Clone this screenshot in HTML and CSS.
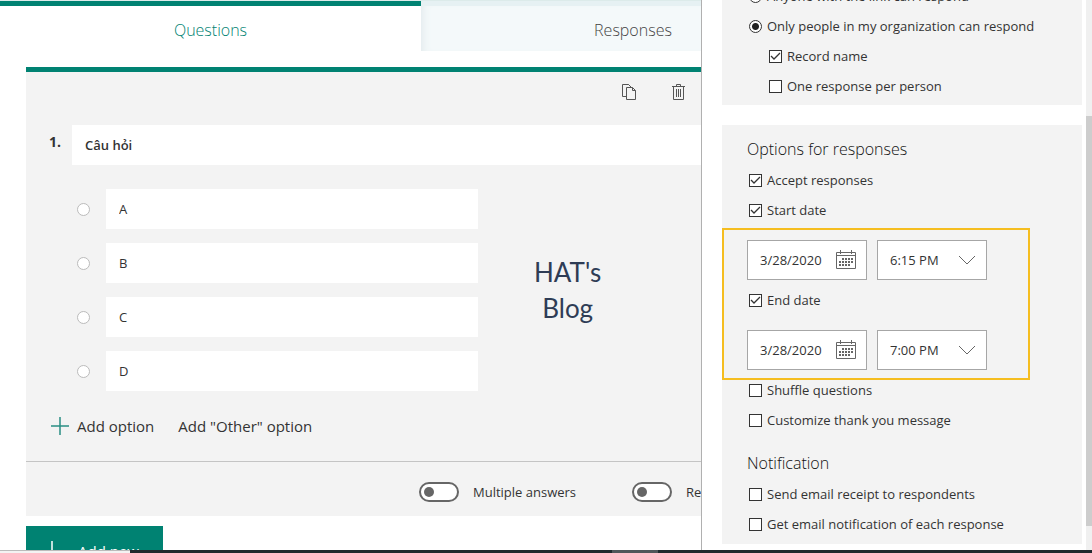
FILE: index.html
```html
<!DOCTYPE html>
<html lang="en">
<head>
  <meta charset="UTF-8">
  <meta name="viewport" content="width=device-width, initial-scale=1.0">
  <title>Forms - Edit</title>
  <link rel="stylesheet" href="styles.css">
</head>
<body>
  <div class="workspace">
    <main class="editor">
      <nav class="tabs">
        <a href="#questions" class="tab active">Questions</a>
        <a href="#responses" class="tab">Responses</a>
      </nav>

      <div class="editor-body">
        <section class="question-card">
          <div class="card-tools">
            <button class="icon-btn" aria-label="Copy question">
              <svg width="16" height="18" viewBox="0 0 16 18" fill="none" stroke="currentColor">
                <path d="M5 13.5H1.5v-12h6l3 3M7.5 1.5l3 3"/>
                <path d="M5.500 4.500h6l3 3v9h-9zM11.500 4.500v3h3"/>
              </svg>
            </button>
            <button class="icon-btn" aria-label="Delete question">
              <svg width="16" height="18" viewBox="0 0 16 18" fill="none" stroke="currentColor">
                <path d="M2 3.500h13M6.500 3.500v-2h4v2M3.500 3.500v13h10v-13M6.500 6v8M8.500 6v8M10.500 6v8"/>
              </svg>
            </button>
          </div>

          <div class="question-row">
            <span class="question-number">1.</span>
            <input type="text" class="question-title" value="Câu hỏi" aria-label="Question">
          </div>

          <div class="answers">
            <div class="options">
              <div class="option">
                <input type="radio" name="answer" class="answer-radio" aria-label="Option A">
                <input type="text" class="option-text" value="A" aria-label="Option 1 text">
              </div>
              <div class="option">
                <input type="radio" name="answer" class="answer-radio" aria-label="Option B">
                <input type="text" class="option-text" value="B" aria-label="Option 2 text">
              </div>
              <div class="option">
                <input type="radio" name="answer" class="answer-radio" aria-label="Option C">
                <input type="text" class="option-text" value="C" aria-label="Option 3 text">
              </div>
              <div class="option">
                <input type="radio" name="answer" class="answer-radio" aria-label="Option D">
                <input type="text" class="option-text" value="D" aria-label="Option 4 text">
              </div>
            </div>
            <p class="blog-name">HAT's<br>Blog</p>
          </div>

          <div class="option-actions">
            <button class="text-btn">
              <svg class="plus" width="18" height="18" viewBox="0 0 18 18" fill="none" stroke="currentColor">
                <path d="M9 0v18M0 9h18" stroke-width="1.500"/>
              </svg>
              Add option
            </button>
            <button class="text-btn">Add "Other" option</button>
          </div>

          <div class="card-footer">
            <label class="toggle"><input type="checkbox" class="switch">Multiple answers</label>
            <label class="toggle"><input type="checkbox" class="switch">Required</label>
          </div>
        </section>

        <button class="add-new">
          <svg width="20" height="20" viewBox="0 0 20 20" fill="none" stroke="currentColor">
            <path d="M10 0v20M0 10h20" stroke-width="1.500"/>
          </svg>
          Add new
        </button>
      </div>
    </main>

    <aside class="settings">
      <div class="settings-body">
        <section class="settings-group">
          <label class="setting"><input type="radio" name="audience" class="radio">Anyone with the link can respond</label>
          <label class="setting"><input type="radio" name="audience" class="radio" checked>Only people in my organization can respond</label>
          <label class="setting nested"><input type="checkbox" class="check" checked>Record name</label>
          <label class="setting nested"><input type="checkbox" class="check">One response per person</label>
        </section>

        <section class="settings-group">
          <h2 class="group-title">Options for responses</h2>
          <label class="setting"><input type="checkbox" class="check" checked>Accept responses</label>
          <label class="setting"><input type="checkbox" class="check" checked>Start date</label>

          <div class="schedule">
            <div class="date-row">
              <div class="date-field">
                <input type="text" value="3/28/2020" aria-label="Start date">
                <button class="calendar-btn" aria-label="Choose start date">
                  <svg width="20" height="20" viewBox="0 0 20 20" fill="none" stroke="currentColor">
                    <path d="M.5 2.500h19v16H.5zM.5 5.500h19M4.500 0v4M15.500 0v4"/>
                    <path d="M6 9h11M3 12h14M3 15h11" stroke-width="2" stroke-dasharray="2 1"/>
                  </svg>
                </button>
              </div>
              <select class="time-select" aria-label="Start time">
                <option>6:15 PM</option>
                <option>7:00 PM</option>
              </select>
            </div>
            <label class="setting"><input type="checkbox" class="check" checked>End date</label>
            <div class="date-row">
              <div class="date-field">
                <input type="text" value="3/28/2020" aria-label="End date">
                <button class="calendar-btn" aria-label="Choose end date">
                  <svg width="20" height="20" viewBox="0 0 20 20" fill="none" stroke="currentColor">
                    <path d="M.5 2.500h19v16H.5zM.5 5.500h19M4.500 0v4M15.500 0v4"/>
                    <path d="M6 9h11M3 12h14M3 15h11" stroke-width="2" stroke-dasharray="2 1"/>
                  </svg>
                </button>
              </div>
              <select class="time-select" aria-label="End time">
                <option>7:00 PM</option>
                <option>6:15 PM</option>
              </select>
            </div>
          </div>

          <label class="setting"><input type="checkbox" class="check">Shuffle questions</label>
          <label class="setting"><input type="checkbox" class="check">Customize thank you message</label>

          <h2 class="group-title">Notification</h2>
          <label class="setting"><input type="checkbox" class="check">Send email receipt to respondents</label>
          <label class="setting"><input type="checkbox" class="check">Get email notification of each response</label>
        </section>
      </div>
      <div class="scrollbar"><div class="scroll-thumb"></div></div>
    </aside>
  </div>

  <div class="taskbar"><span class="taskbar-search"></span><span class="taskbar-app"></span></div>
</body>
</html>
```

FILE: styles.css
```css
:root {
  --theme: #008272;
  --surface: #f3f3f3;
  --text: #333333;
  --border: #a6a6a6;
  --highlight: #f5bd1f;
}

*, *::before, *::after {
  box-sizing: border-box;
}

* {
  margin: 0;
  padding: 0;
}

body {
  display: flex;
  flex-direction: column;
  height: 100vh;
  overflow: hidden;
  font-family: "Open Sans", "Noto Sans", sans-serif;
  font-size: 13px;
  color: var(--text);
  background-color: #fff;
}

button, input, select {
  font: inherit;
  color: inherit;
}

button {
  background: none;
  border: none;
  cursor: pointer;
}

input[type="text"] {
  min-width: 0;
  border: none;
  background-color: #fff;
}

.workspace {
  flex: 1;
  display: flex;
  min-height: 0;
}

/* Editor */
.editor {
  flex: 1;
  min-width: 0;
  overflow: hidden;
}

.tabs {
  display: grid;
  grid-template-columns: 421px 424px;
  height: 51px;
  border-top: 1px solid #dcebea;
}

.tab {
  display: flex;
  align-items: center;
  justify-content: center;
  padding-top: 2px;
  border-top: 5px solid #e6f1f3;
  background-color: #f4f9fa;
  box-shadow: inset 8px 0 8px -6px #e2eaec;
  font-size: 16px;
  font-weight: 300;
  line-height: 24px;
  color: #444;
  text-decoration: none;
}

.tab.active {
  border-top-color: var(--theme);
  background-color: #fff;
  box-shadow: none;
  color: var(--theme);
}

.editor-body {
  padding: 16px 0 0 26px;
}

.question-card {
  border-top: 5px solid var(--theme);
  background-color: var(--surface);
}

.card-tools {
  display: flex;
  justify-content: flex-end;
  gap: 17px;
  height: 53px;
  padding: 4px 7px 0 0;
}

.icon-btn {
  display: flex;
  align-items: center;
  justify-content: center;
  width: 32px;
  height: 32px;
  color: #555;
}

.question-row {
  display: flex;
  padding-left: 23px;
  font-weight: 600;
}

.question-number {
  width: 23px;
  font-size: 14px;
  font-weight: 700;
  line-height: 34px;
}

.question-title {
  flex: 1;
  height: 40px;
  padding: 0 13px;
}

.answers {
  display: flex;
  align-items: center;
  gap: 56px;
  padding: 24px 0 0 51px;
}

.options {
  display: flex;
  flex-direction: column;
  gap: 14px;
}

.option {
  display: flex;
  align-items: center;
  gap: 16px;
}

.answer-radio {
  appearance: none;
  width: 13px;
  height: 13px;
  border: 1px solid #bbb;
  border-radius: 50%;
  background-color: #fff;
}

.option-text {
  width: 372px;
  height: 40px;
  padding: 0 13px;
}

.blog-name {
  font-family: Lato, "Open Sans", sans-serif;
  font-size: 26px;
  line-height: 36px;
  text-align: center;
  color: #2e3c55;
}

.option-actions {
  display: flex;
  gap: 24px;
  height: 70px;
  padding-left: 25px;
}

.text-btn {
  display: flex;
  align-items: center;
  gap: 8px;
  font-size: 15px;
}

.plus {
  color: #2a8f84;
}

.card-footer {
  display: flex;
  gap: 56px;
  height: 55px;
  padding: 5px 0 0 393px;
  border-top: 1px solid #c4c4c4;
  white-space: nowrap;
}

.toggle {
  display: flex;
  align-items: center;
  gap: 14px;
}

.switch {
  appearance: none;
  display: flex;
  align-items: center;
  width: 40px;
  height: 20px;
  padding-left: 3px;
  border: 2px solid #666;
  border-radius: 10px;
  background-color: #fff;
}

.switch::before {
  content: "";
  width: 10px;
  height: 10px;
  border-radius: 50%;
  background-color: #666;
}

.switch:checked {
  justify-content: flex-end;
}

.add-new {
  display: flex;
  align-items: center;
  gap: 16px;
  height: 50px;
  margin-top: 10px;
  padding: 0 24px 0 16px;
  background-color: var(--theme);
  color: #fff;
  font-size: 15px;
}

/* Settings panel */
.settings {
  display: flex;
  gap: 4px;
  border-left: 1px solid #b0b0b0;
  padding-left: 20px;
}

.settings-body {
  display: flex;
  flex-direction: column;
  justify-content: flex-end;
  gap: 20px;
  width: 360px;
  padding-bottom: 6px;
  overflow: hidden;
}

.settings-group {
  flex-shrink: 0;
  padding: 0 25px 5px;
  background-color: var(--surface);
}

.settings-group:first-child {
  padding-bottom: 4px;
}

.group-title {
  padding-top: 8px;
  font-size: 16px;
  font-weight: 300;
  line-height: 32px;
  color: #111;
}

.setting + .group-title {
  padding-top: 12px;
}

.setting {
  display: flex;
  align-items: center;
  gap: 5px;
  height: 30px;
  padding-left: 2px;
  white-space: nowrap;
}

.setting.nested {
  padding-left: 22px;
}

.check, .radio {
  appearance: none;
  width: 13px;
  height: 13px;
  border: 1px solid #333;
  background: #fff center no-repeat;
}

.check:checked {
  background-image: url("data:image/svg+xml;charset=UTF-8,%3csvg xmlns='http://www.w3.org/2000/svg' width='11' height='11' fill='none' stroke='%23333'%3e%3cpath d='M1 5l3 3 6-6' stroke-width='1.300'/%3e%3c/svg%3e");
}

.radio {
  border-radius: 50%;
}

.radio:checked {
  background-image: radial-gradient(circle, #222 3px, transparent 4px);
}

.schedule {
  position: relative;
}

/* frame around both date rows */
.schedule::after {
  content: "";
  position: absolute;
  top: 3px;
  bottom: -5px;
  left: -25px;
  width: 308px;
  border: 2px solid var(--highlight);
  pointer-events: none;
}

.date-row {
  display: flex;
  gap: 10px;
  padding: 15px 0 5px;
}

.date-field {
  display: flex;
  width: 120px;
  height: 40px;
  border: 1px solid var(--border);
  background-color: #fff;
}

.date-field input {
  flex: 1;
  padding-left: 12px;
}

.calendar-btn {
  display: flex;
  align-items: center;
  padding-right: 10px;
  color: #666;
}

.time-select {
  appearance: none;
  width: 110px;
  height: 40px;
  padding-left: 12px;
  border: 1px solid var(--border);
  border-radius: 0;
  background: #fff url("data:image/svg+xml;charset=UTF-8,%3csvg xmlns='http://www.w3.org/2000/svg' width='18' height='10' fill='none' stroke='%23666'%3e%3cpath d='M1 1l8 8 8-8'/%3e%3c/svg%3e") right 10px center no-repeat;
}

.scrollbar {
  width: 6px;
  padding: 116px 0 24px;
  background-color: #f0f0f0;
}

.scroll-thumb {
  height: 100%;
  background-color: #cdcdcd;
}

.taskbar {
  display: flex;
  height: 3px;
  background-color: #1f2a2e;
}

.taskbar-search {
  width: 130px;
  border-top: 1px solid #bbb;
  background-color: #f3f3f3;
}

.taskbar-app {
  width: 46px;
  margin-left: 482px;
  background-color: #50565a;
}
```
